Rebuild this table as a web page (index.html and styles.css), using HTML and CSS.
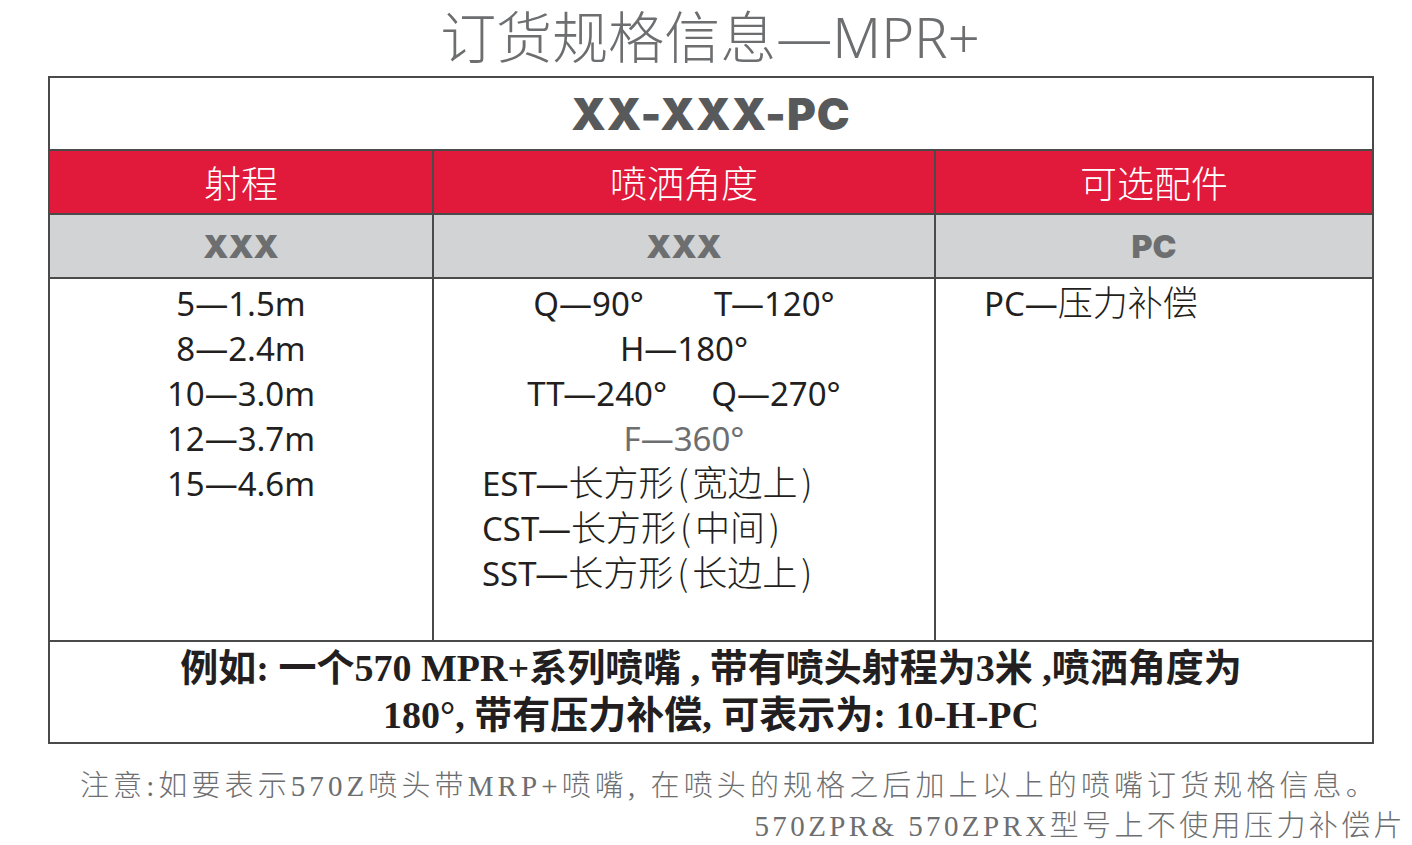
FILE: index.html
```html
<!DOCTYPE html>
<html lang="zh-CN">
<head>
<meta charset="utf-8">
<title>订货规格信息—MPR+</title>
<link rel="stylesheet" href="styles.css">
</head>
<body>
<h1 class="title">订货规格信息—MPR+</h1>
<table class="spec">
  <colgroup>
    <col class="c1"><col class="c2"><col class="c3">
  </colgroup>
  <tr class="r-code"><td colspan="3">XX-XXX-PC</td></tr>
  <tr class="r-head"><td>射程</td><td>喷洒角度</td><td>可选配件</td></tr>
  <tr class="r-sub"><td>XXX</td><td>XXX</td><td>PC</td></tr>
  <tr class="r-body">
    <td class="b1">
      <div>5—1.5m</div>
      <div>8—2.4m</div>
      <div>10—3.0m</div>
      <div>12—3.7m</div>
      <div>15—4.6m</div>
    </td>
    <td class="b2">
      <div class="ctr"><span class="pair">Q—90°</span><span>T—120°</span></div>
      <div class="ctr">H—180°</div>
      <div class="ctr"><span class="pair2">TT—240°</span><span>Q—270°</span></div>
      <div class="ctr grey">F—360°</div>
      <div class="lft">EST—<span class="cjk">长方形<span class="par">(</span>宽边上<span class="par">)</span></span></div>
      <div class="lft">CST—<span class="cjk">长方形<span class="par">(</span>中间<span class="par">)</span></span></div>
      <div class="lft">SST—<span class="cjk">长方形<span class="par">(</span>长边上<span class="par">)</span></span></div>
    </td>
    <td class="b3">
      <div>PC—<span class="cjk">压力补偿</span></div>
    </td>
  </tr>
  <tr class="r-foot"><td colspan="3">例如: 一个570 MPR+系列喷嘴 , 带有喷头射程为3米 ,喷洒角度为<br>180°, 带有压力补偿, 可表示为: 10-H-PC</td></tr>
</table>
<p class="note">注意:如要表示570Z喷头带MRP+喷嘴, 在喷头的规格之后加上以上的喷嘴订货规格信息。</p>
<p class="note2">570ZPR&amp; 570ZPRX型号上不使用压力补偿片</p>
</body>
</html>
```
FILE: styles.css
```css
html, body {
  margin: 0;
  padding: 0;
  background: #ffffff;
}
body {
  width: 1412px;
  height: 845px;
  overflow: hidden;
  font-family: "Noto Sans", "Noto Sans CJK SC", sans-serif;
}
.title {
  margin: 0;
  height: 76px;
  line-height: 72px;
  text-align: center;
  font-size: 56px;
  font-weight: 300;
  color: #6d6e70;
  padding-left: 8px;
}
.spec {
  margin-left: 48px;
  width: 1324px;
  border-collapse: collapse;
  table-layout: fixed;
  border: 2px solid #4a4a4a;
}
.c1 { width: 384px; }
.c2 { width: 502px; }
.c3 { width: 438px; }
.spec td {
  border: 2px solid #4a4a4a;
  padding: 0;
  text-align: center;
}
.r-code td {
  height: 71px;
  font-family: "Inter", "DejaVu Sans", sans-serif;
  font-weight: 900;
  font-size: 44px;
  letter-spacing: 1px;
  color: #58595b;
}
.r-head td {
  height: 62px;
  background: #e1193a;
  color: #ffffff;
  font-family: "Noto Sans CJK SC", sans-serif;
  font-weight: 300;
  font-size: 37px;
}
.r-sub td {
  height: 62px;
  background: #d1d3d4;
  font-family: "Inter", "DejaVu Sans", sans-serif;
  font-weight: 900;
  font-size: 32px;
  color: #6d6e70;
}
.r-body td {
  height: 359px;
  vertical-align: top;
  padding-top: 2px;
  font-family: "Noto Sans", "Noto Sans CJK SC", sans-serif;
  font-size: 33px;
  line-height: 45px;
  color: #231f20;
}
.r-body td div {
  height: 45px;
  white-space: nowrap;
}
.b1 div { text-align: center; }
.b2 .ctr { text-align: center; }
.b2 .lft {
  text-align: left;
  padding-left: 48px;
}
.cjk {
  font-family: "Noto Sans CJK SC", sans-serif;
  font-weight: 300;
  font-size: 35px;
  line-height: 1;
}
.par {
  margin: 0 4px;
}
.pair { margin-right: 70px; }
.pair2 { margin-right: 44px; }
.grey { color: #6d6e70; }
.b3 div {
  text-align: left;
  padding-left: 48px;
}
.r-foot td {
  height: 100px;
  font-family: "Liberation Serif", "Noto Sans CJK SC", serif;
  font-weight: 700;
  font-size: 38px;
  line-height: 47px;
  color: #231f20;
}
.note {
  margin: 24px 0 0 80px;
  font-family: "Liberation Serif", "Noto Sans CJK SC", serif;
  font-weight: 300;
  font-size: 29px;
  letter-spacing: 4.1px;
  line-height: 36px;
  color: #6d6e70;
  white-space: nowrap;
}
.note2 {
  margin: 4px 6px 0 0;
  text-align: right;
  font-family: "Liberation Serif", "Noto Sans CJK SC", serif;
  font-weight: 300;
  font-size: 29px;
  letter-spacing: 3.4px;
  line-height: 36px;
  color: #6d6e70;
  white-space: nowrap;
}
```
